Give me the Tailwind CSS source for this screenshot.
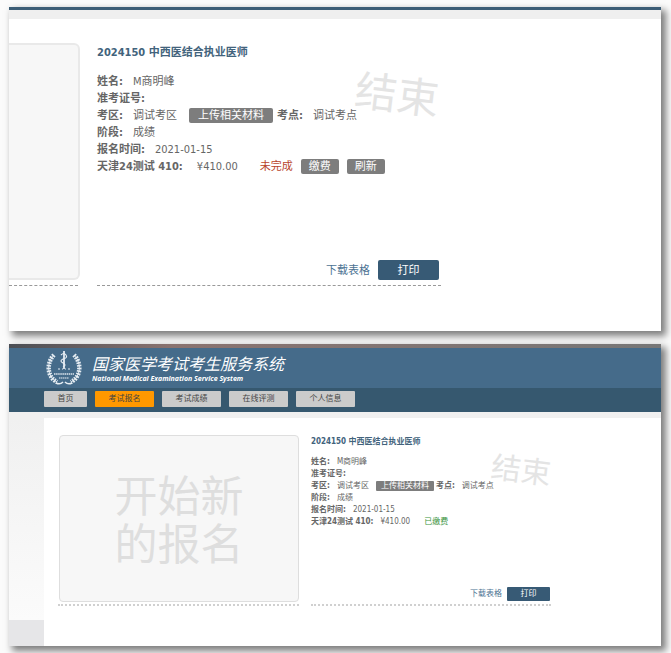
<!DOCTYPE html>
<html lang="zh-CN">
<head>
<meta charset="utf-8">
<title>国家医学考试考生服务系统</title>
<script src="https://cdn.jsdelivr.net/npm/@tailwindcss/browser@4"></script>
</head>
<body class="flex flex-col gap-[13px] bg-[#fbfbfb] pt-[7px] pr-[10px] pb-[7px] pl-[9px] font-['DejaVu_Sans_Condensed','Noto_Sans_CJK_SC',sans-serif] text-[#666]">

<section class="border-t-3 border-[#3c5d76] bg-white shadow-[4px_4px_7px_1px_rgba(0,0,0,0.5)]">
  <div class="h-[9px] bg-[#efefef]"></div>
  <div class="flex pt-6 pb-[45px] text-[11px] leading-[17px]">
    <div class="w-[71px] shrink-0">
      <div class="h-[237px] rounded-r-md border-2 border-l-0 border-[#e9e9e9] bg-[#f7f7f7]"></div>
      <div class="mt-[5px] mr-[2px] border-t border-dashed border-[#999]"></div>
    </div>
    <article class="relative ml-[17px] flex w-[344px] shrink-0 flex-col pt-px">
      <div class="absolute top-[26px] right-[2px] rotate-[7deg] text-[42px] leading-[54px] text-[#e4e4e4]">结束</div>
      <h2 class="font-bold text-[#42637c]">2024150 中西医结合执业医师</h2>
      <dl class="relative mt-3">
        <div class="flex gap-[10px]"><dt class="font-bold">姓名:</dt><dd>M商明峰</dd></div>
        <div class="flex gap-[10px]"><dt class="font-bold">准考证号:</dt><dd></dd></div>
        <div class="flex items-center gap-[10px]"><dt class="font-bold">考区:</dt><dd>调试考区</dd>
          <dd class="flex items-center gap-1 pl-[2px]"><button class="h-[15px] w-[84px] rounded-xs bg-[#7d7d7d] leading-[15px] text-white">上传相关材料</button><span class="font-bold">考点:</span></dd><dd>调试考点</dd></div>
        <div class="flex gap-[10px]"><dt class="font-bold">阶段:</dt><dd>成绩</dd></div>
        <div class="flex gap-[10px]"><dt class="font-bold">报名时间:</dt><dd>2021-01-15</dd></div>
        <div class="flex items-center gap-[14px]"><dt class="font-bold">天津24测试 410:</dt><dd>¥410.00</dd>
          <dd class="flex items-center gap-2 pl-2 text-[#b8452c]">未完成<button class="h-[15px] w-[38px] rounded-xs bg-[#7d7d7d] leading-[15px] text-white">缴费</button><button class="h-[15px] w-[38px] rounded-xs bg-[#7d7d7d] leading-[15px] text-white">刷新</button></dd></div>
      </dl>
      <div class="mt-auto mb-[5px] flex items-center justify-end gap-2 pr-[2px]">
        <a href="#" class="text-[#4d7393]">下载表格</a>
        <button class="h-5 w-[61px] rounded-xs bg-[#375a75] text-white">打印</button>
      </div>
      <div class="border-t border-dashed border-[#999]"></div>
    </article>
  </div>
</section>

<section class="bg-white shadow-[4px_4px_7px_1px_rgba(0,0,0,0.5)]">
  <div class="h-[4px] bg-linear-to-r from-[#4b4e54] via-[#8a7370] via-25% to-[#777]"></div>
  <header class="flex h-10 items-center gap-[10px] bg-[#456b8a] pl-[37px] text-white">
    <svg class="h-9 w-9" viewBox="0 0 36 36" fill="none" stroke="#e6edf3" aria-hidden="true">
      <path d="M8 5C0 13 1 27 11 32M28 5C36 13 35 27 25 32" stroke-width="1"/>
      <path d="M8 5C0 13 1 27 11 32M28 5C36 13 35 27 25 32" stroke-width="4.500" stroke-dasharray="1.700 1.100"/>
      <path d="M10 33q4 2 7-1M26 33q-4 2-7-1" stroke-width="1.600"/>
      <path d="M18 1v18" stroke-width="1.800"/>
      <path d="M15 5q3-3 5 0t-3 4q-4 2 0 4 4 2 0 4" stroke-width="1.200"/>
      <path d="M12 19h2m2 0h1m2 0h1m2 0h2" stroke-width="1.200"/>
      <path d="M8 24h20" stroke-width="2" stroke-dasharray="1.500 .6" opacity=".7"/>
      <path d="M13 28h10" stroke-width="1.500" stroke-dasharray="1.500 .5" opacity=".7"/>
    </svg>
    <div>
      <h1 class="text-[16px] leading-5 italic">国家医学考试考生服务系统</h1>
      <p class="font-['Open_Sans',sans-serif] text-[7px] leading-[7px] font-bold italic">National Medical Examination Service System</p>
    </div>
  </header>
  <nav class="flex gap-2 bg-[#36586f] pt-[3px] pb-[5px] pl-[35px] text-center text-[8px] leading-4 text-[#444]">
    <a href="#" class="w-[43px] rounded-[1px] bg-[#cbcbcb]">首页</a>
    <a href="#" class="w-[59px] rounded-[1px] bg-[#ff9800]">考试报名</a>
    <a href="#" class="w-[59px] rounded-[1px] bg-[#cbcbcb]">考试成绩</a>
    <a href="#" class="w-[59px] rounded-[1px] bg-[#cbcbcb]">在线评测</a>
    <a href="#" class="w-[59px] rounded-[1px] bg-[#cbcbcb]">个人信息</a>
  </nav>
  <div class="h-[6px] bg-[#f0f0f0]"></div>
  <div class="flex">
    <div class="flex w-[35px] shrink-0 flex-col">
      <div class="grow bg-linear-to-b from-[#f0f0f0] to-[#fbfbfb]"></div>
      <div class="h-[26px] bg-[#e6e6e8]"></div>
    </div>
    <main class="flex grow gap-3 rounded-tl-sm bg-white pt-[17px] pb-[40px] pl-[14px] text-[8px] leading-3">
      <div class="w-[241px] shrink-0">
        <a href="#" class="ml-px flex h-[167px] items-center justify-center rounded-sm border border-[#dedede] bg-[#f7f7f7] pt-1 text-center text-[43px] leading-[48px] text-[#dedede]">开始新<br>的报名</a>
        <div class="mt-[2px] border-t-2 border-dotted border-[#d0d0d0]"></div>
      </div>
      <article class="relative flex w-[240px] shrink-0 flex-col pt-px">
        <div class="absolute top-[20px] right-[0px] rotate-[7deg] text-[30px] leading-[32px] text-[#e4e4e4]">结束</div>
        <h2 class="font-bold text-[#42637c]">2024150 中西医结合执业医师</h2>
        <dl class="relative mt-2">
          <div class="flex gap-[7px]"><dt class="font-bold">姓名:</dt><dd>M商明峰</dd></div>
          <div class="flex gap-[7px]"><dt class="font-bold">准考证号:</dt><dd></dd></div>
          <div class="flex items-center gap-[7px]"><dt class="font-bold">考区:</dt><dd>调试考区</dd>
            <dd class="flex items-center gap-[2px]"><button class="h-[10px] w-[58px] rounded-[1px] bg-[#7d7d7d] leading-[10px] text-white">上传相关材料</button><span class="font-bold">考点:</span></dd><dd>调试考点</dd></div>
          <div class="flex gap-[7px]"><dt class="font-bold">阶段:</dt><dd>成绩</dd></div>
          <div class="flex gap-[7px]"><dt class="font-bold">报名时间:</dt><dd>2021-01-15</dd></div>
          <div class="flex gap-[7px]"><dt class="font-bold">天津24测试 410:</dt><dd>¥410.00</dd><dd class="pl-[7px] text-[#3c9440]">已缴费</dd></div>
        </dl>
        <div class="mt-auto mb-[3px] flex items-center justify-end gap-[5px] pr-px">
          <a href="#" class="text-[#4d7393]">下载表格</a>
          <button class="h-[14px] w-[43px] rounded-[1px] bg-[#375a75] text-white">打印</button>
        </div>
        <div class="border-t-2 border-dotted border-[#d0d0d0]"></div>
      </article>
    </main>
  </div>
</section>
</body>
</html>
